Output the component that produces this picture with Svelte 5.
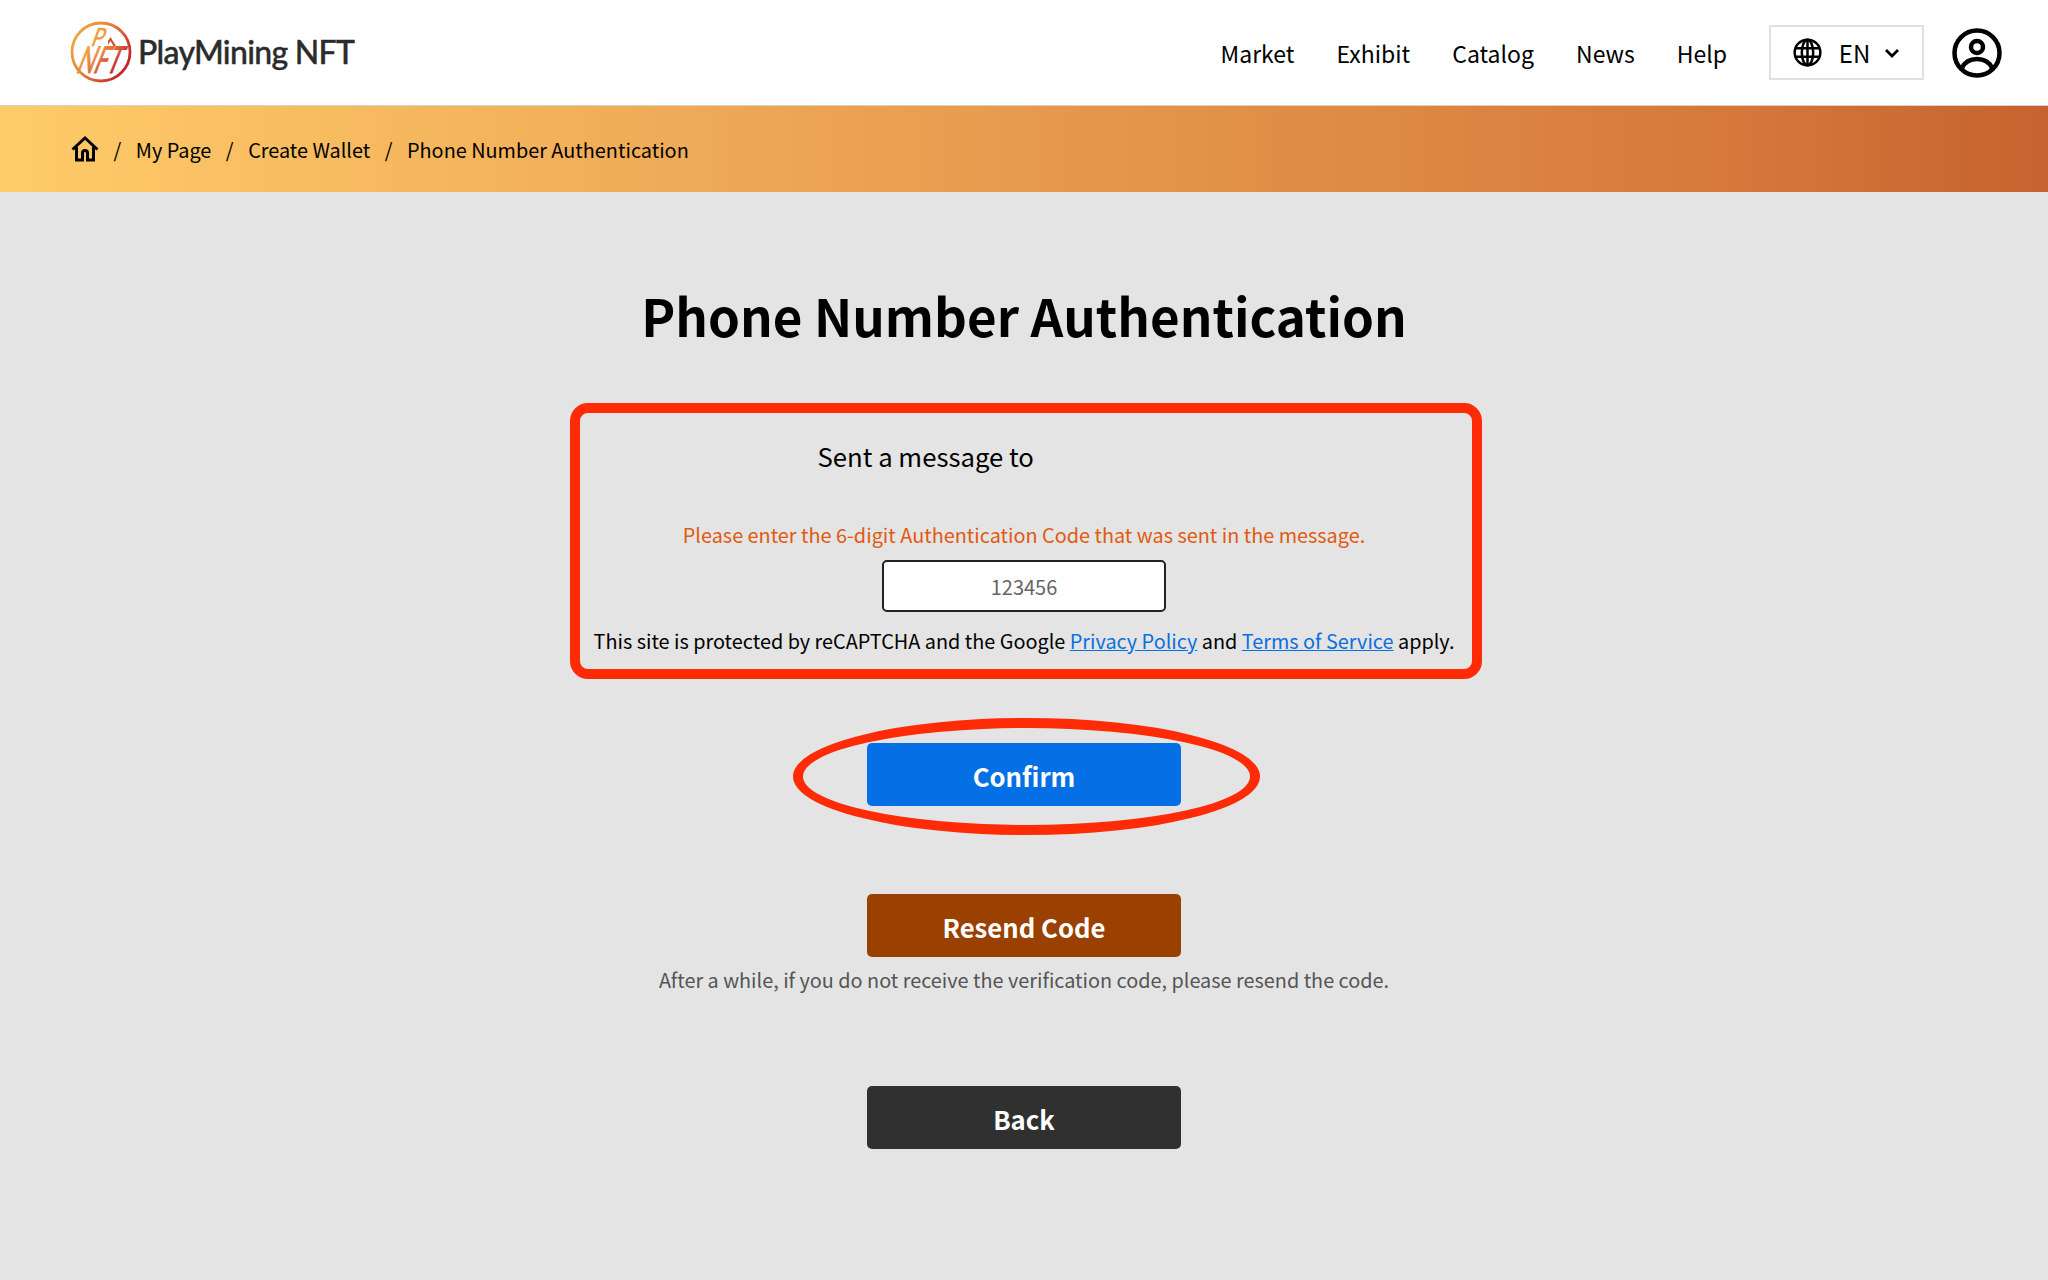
<script>
    const navLinks = ["Market", "Exhibit", "Catalog", "News", "Help"];
    const crumbs = ["My Page", "Create Wallet", "Phone Number Authentication"];
</script>

<div class="page">
    <header class="header">
        <a class="logo" href="#top">
            <svg class="logo-mark" viewBox="0 0 62 62" width="62" height="62">
                <defs>
                    <linearGradient id="logoGrad" x1="0" y1="0" x2="1" y2="0.6">
                        <stop offset="0" stop-color="#f6b043" />
                        <stop offset="0.5" stop-color="#e6813a" />
                        <stop offset="1" stop-color="#c4242c" />
                    </linearGradient>
                </defs>
                <circle cx="31" cy="31" r="29" fill="none" stroke="url(#logoGrad)" stroke-width="2.800" />
                <text class="mark-p" transform="translate(20 25) skewX(-20) scale(0.8 1)">P</text>
                <path d="M38 20l2.500-4 5.500 9h-2.500l-3-5-2.500 4z" fill="#d2502f" />
                <text class="mark-nft" transform="translate(5 52) skewX(-22) scale(0.6 1)">NFT</text>
            </svg>
            <span class="logo-text">PlayMining NFT</span>
        </a>
        <nav class="nav">
            {#each navLinks as link}
                <a href="#top">{link}</a>
            {/each}
        </nav>
        <button class="lang">
            <svg viewBox="0 0 28 28" width="29" height="29" fill="none" stroke="#000" stroke-width="2.400">
                <circle cx="14" cy="14" r="12.400" />
                <ellipse cx="14" cy="14" rx="5.500" ry="12.400" />
                <path d="M14 1.600v24.800M2.500 9.800h23M2.500 18.200h23" />
            </svg>
            <span class="lang-label">EN</span>
            <svg viewBox="0 0 16 16" width="16" height="16" fill="none" stroke="#000" stroke-width="2.800">
                <path d="M2 5l6 6 6-6" />
            </svg>
        </button>
        <svg class="user" viewBox="0 0 50 50" width="50" height="50" fill="none" stroke="#000" stroke-width="4.500">
            <circle cx="25" cy="25" r="22.500" />
            <circle cx="25" cy="19" r="6" />
            <path d="M10 40c3-6.500 8.500-9 15-9s12 2.500 15 9" />
        </svg>
    </header>

    <div class="crumbs">
        <svg viewBox="0 0 28 28" width="28" height="28" fill="none" stroke="#000" stroke-width="3">
            <path d="M1.500 14.500L14 3l12.500 11.500M5.500 12v13h6v-7a2.500 2.500 0 0 1 5 0v7h6V12" />
        </svg>
        {#each crumbs as crumb}
            <span class="sep">/</span>
            <a href="#top">{crumb}</a>
        {/each}
    </div>

    <main class="main">
        <h1>Phone Number Authentication</h1>

        <section class="box">
            <p class="sent">Sent a message to</p>
            <p class="hint">Please enter the 6-digit Authentication Code that was sent in the message.</p>
            <input class="code" placeholder="123456" />
            <p class="recaptcha">
                This site is protected by reCAPTCHA and the Google <a href="#top">Privacy Policy</a> and <a href="#top">Terms of Service</a> apply.
            </p>
        </section>

        <div class="confirm-wrap">
            <button class="btn blue">Confirm</button>
            <span class="ring"></span>
        </div>

        <button class="btn brown">Resend Code</button>
        <p class="note">After a while, if you do not receive the verification code, please resend the code.</p>

        <button class="btn dark">Back</button>
    </main>
</div>

<style>
    :global(body) {
        margin: 0;
        background: #e4e4e4;
    }
    .page {
        min-height: 1280px;
        font-family: "Noto Sans CJK JP", "Noto Sans", sans-serif;
        color: #000;
    }
    a {
        color: inherit;
        text-decoration: none;
    }
    p {
        margin: 0;
    }

    .header {
        height: 106px;
        box-sizing: border-box;
        background: #fff;
        border-bottom: 1px solid #d2d2d2;
        display: flex;
        align-items: center;
        padding: 0 46px 0 70px;
    }
    .logo {
        display: flex;
        align-items: center;
        gap: 6px;
        margin: -2px auto 0 0;
    }
    .logo-text {
        font-family: Lato, sans-serif;
        font-size: 32px;
        font-weight: 500;
        color: #2b2b2b;
        letter-spacing: -0.7px;
        -webkit-text-stroke: 0.4px #2b2b2b;
    }
    .mark-p {
        font: 400 25px Lato, sans-serif;
        fill: #ee9d3e;
        stroke: #ee9d3e;
        stroke-width: 0.5;
    }
    .mark-nft {
        font: 400 37px Lato, sans-serif;
        fill: url(#logoGrad);
        stroke: url(#logoGrad);
        stroke-width: 0.8;
    }
    .nav {
        display: flex;
        gap: 42px;
        font-size: 23px;
        margin-right: 42px;
    }
    .lang {
        width: 155px;
        height: 55px;
        box-sizing: border-box;
        background: #fff;
        border: 2px solid #e0e0e0;
        display: flex;
        align-items: center;
        justify-content: center;
        gap: 14px;
        font: inherit;
        font-size: 24px;
        color: #000;
        margin-right: 28px;
    }
    .lang-label {
        margin-left: 3px;
    }
    .user {
        flex: none;
    }

    .crumbs {
        height: 86px;
        background: linear-gradient(90deg, #ffcb69 0%, #d5783a 85%, #c6622f 100%);
        display: flex;
        align-items: center;
        padding-left: 71px;
        font-size: 19.850px;
    }
    .sep {
        margin: 0 14.500px;
    }

    .main {
        display: flex;
        flex-direction: column;
        align-items: center;
    }
    h1 {
        font-size: 51.100px;
        font-weight: 700;
        line-height: 80px;
        margin: 83px 0 48px;
    }
    .box {
        width: 912px;
        height: 276px;
        box-sizing: border-box;
        margin-left: 3px;
        border: 10px solid #ff2a06;
        border-radius: 18px;
        display: flex;
        flex-direction: column;
        align-items: center;
    }
    .sent {
        align-self: flex-start;
        margin: 23px 0 0 238px;
        font-size: 25.700px;
        line-height: 40px;
    }
    .hint {
        margin-top: 43px;
        margin-left: -3px;
        font-size: 19.850px;
        line-height: 32px;
        color: #e05a10;
    }
    .code {
        width: 284px;
        height: 52px;
        box-sizing: border-box;
        margin-top: 9px;
        margin-left: -3px;
        border: 2px solid #222;
        border-radius: 5px;
        background: #fff;
        text-align: center;
        font: inherit;
        font-size: 20px;
    }
    .code::placeholder {
        color: #666;
        opacity: 1;
    }
    .recaptcha {
        margin-top: 13px;
        margin-left: -3px;
        font-size: 19.850px;
        line-height: 32px;
        white-space: nowrap;
    }
    .recaptcha a {
        color: #0a6fe0;
        text-decoration: underline;
    }

    .btn {
        display: block;
        width: 314px;
        height: 63px;
        border: 0;
        border-radius: 5px;
        color: #fff;
        font: inherit;
        font-size: 25.700px;
        font-weight: 700;
        padding: 1px 0 0;
    }
    .blue {
        background: #0570e6;
    }
    .brown {
        background: #9a4000;
        margin-top: 88px;
    }
    .dark {
        background: #303030;
        margin-top: 90px;
    }
    .confirm-wrap {
        position: relative;
        margin-top: 64px;
    }
    .ring {
        position: absolute;
        left: -74px;
        top: -25px;
        width: 467px;
        height: 117px;
        box-sizing: border-box;
        border: 10px solid #ff2a06;
        border-radius: 50%;
    }
    .note {
        margin-top: 7px;
        font-size: 19.850px;
        line-height: 32px;
        color: #555;
    }
</style>
